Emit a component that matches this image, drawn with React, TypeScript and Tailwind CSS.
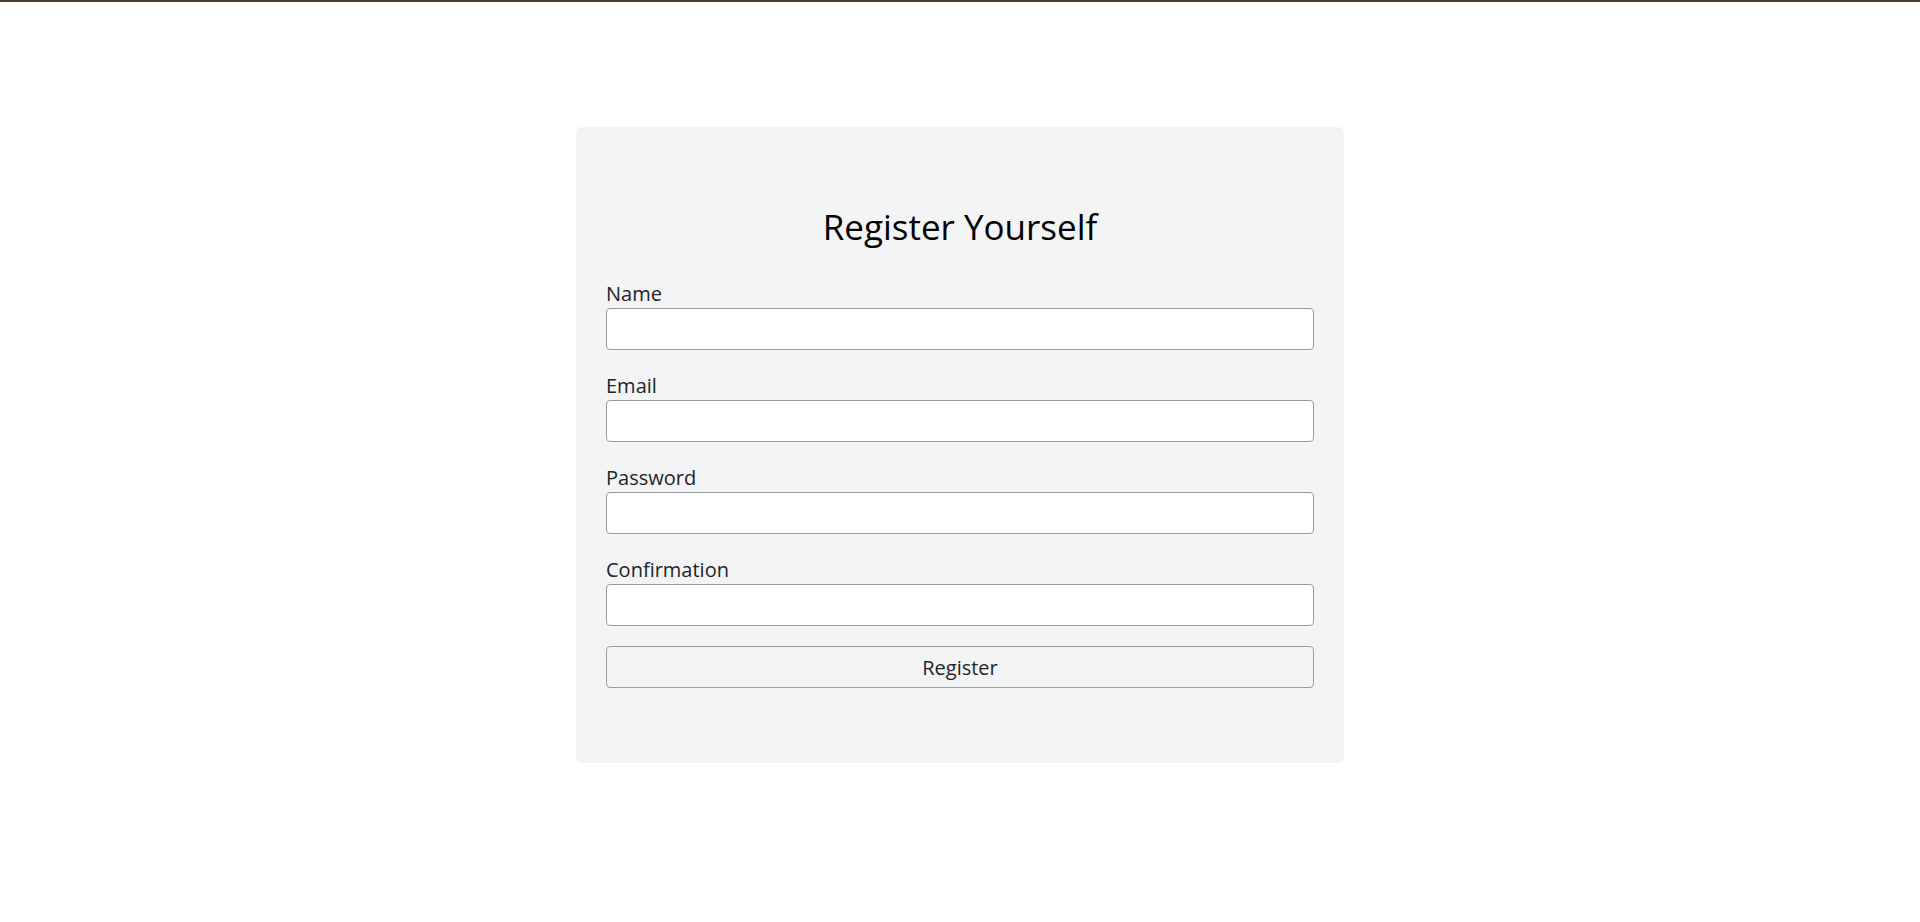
import { useState } from 'react'

const fields = [
  { id: 'name', label: 'Name', type: 'text' },
  { id: 'email', label: 'Email', type: 'email' },
  { id: 'password', label: 'Password', type: 'password' },
  { id: 'confirmation', label: 'Confirmation', type: 'password' },
]

export default function App() {
  const [values, setValues] = useState<Record<string, string>>({})

  return (
    <div className="min-h-screen bg-white font-['Segoe_UI','Open_Sans',sans-serif] text-[#212529]">
      <div className="h-[2px] bg-[#4b3d30]" />
      <div className="flex justify-center pt-[125px]">
        <form
          className="w-[768px] rounded-md bg-[#f3f4f6] px-[30px] pb-[75px] pt-[80px]"
          onSubmit={(e) => e.preventDefault()}
        >
          <h1 className="mb-[33px] text-center text-[35px] leading-[40px] text-black">Register Yourself</h1>
          {fields.map((f) => (
            <div key={f.id} className="mb-[22px] flex flex-col last-of-type:mb-[20px]">
              <label htmlFor={f.id} className="text-[20px] leading-[28px]">
                {f.label}
              </label>
              <input
                id={f.id}
                type={f.type}
                value={values[f.id] ?? ''}
                onChange={(e) => setValues({ ...values, [f.id]: e.target.value })}
                className="h-[42px] rounded-[4px] border border-[#9a9ca1] bg-white px-3 text-[20px] outline-none"
              />
            </div>
          ))}
          <button
            type="submit"
            className="h-[42px] w-full rounded-[4px] border border-[#9a9ca1] bg-[#f3f4f6] pt-[2px] text-[20px] text-[#212529]"
          >
            Register
          </button>
        </form>
      </div>
    </div>
  )
}
